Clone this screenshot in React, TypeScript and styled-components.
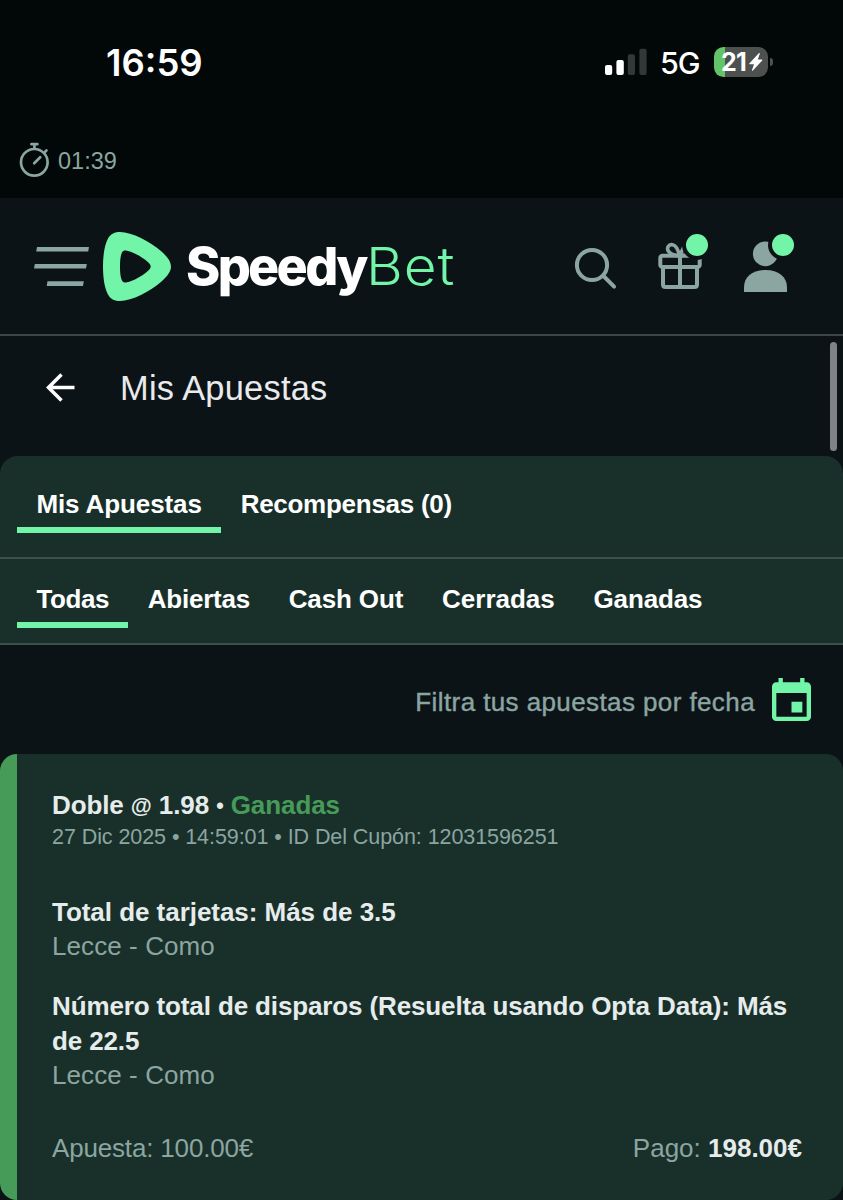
import React from "react";
import styled, { createGlobalStyle } from "styled-components";

const c = {
  page: "#0c1317",
  status: "#010807",
  panel: "#19302a",
  mint: "#73f5a9",
  green: "#479b59",
  muted: "#8ba5a1",
  light: "#e6eceb",
};

const Global = createGlobalStyle`
  * { box-sizing: border-box; }
  body { margin: 0; background: ${c.page}; font-family: "Liberation Sans", Arial, sans-serif; }
  svg { display: block; flex: none; }
`;

const Screen = styled.main`
  width: 843px;
  height: 1200px;
  overflow: hidden;
  background: ${c.page};
  color: #fff;
`;

const StatusArea = styled.div`
  height: 198px;
  background: ${c.status};
  display: flex;
  flex-direction: column;
  justify-content: space-between;
`;

const StatusBar = styled.div`
  height: 124px;
  padding: 0 70px 0 106px;
  display: flex;
  align-items: center;
  justify-content: space-between;
  font-family: Inter, sans-serif;
`;

const Clock = styled.span`
  font-size: 36.5px;
  font-weight: 600;
  line-height: 44px;
  padding-top: 1px;
`;

const StatusIcons = styled.div`
  display: flex;
  align-items: center;
`;

const Network = styled.span`
  width: 53px;
  padding: 2px 0 0 13px;
  font-size: 30.5px;
  font-weight: 500;
  letter-spacing: -1px;
  line-height: 40px;
  white-space: nowrap;
`;

const Battery = styled.div`
  width: 54px;
  height: 30px;
  margin-left: 14px;
  padding-left: 7px;
  border-radius: 9.5px;
  display: flex;
  align-items: center;
  background: linear-gradient(90deg, #62c466 11.5px, #4c5150 11.5px);
`;

const Charge = styled.span`
  font-size: 25px;
  font-weight: 700;
  letter-spacing: -0.8px;
  width: 28px;
`;

const Nub = styled.div`
  width: 3px;
  height: 8px;
  margin-left: 2px;
  border-radius: 0 3px 3px 0;
  background: #4c5150;
`;

const Session = styled.div`
  height: 60px;
  padding: 4px 0 0 19px;
  display: flex;
  align-items: flex-start;
  gap: 8px;
  color: ${c.muted};
  font-size: 23.5px;
  line-height: 38px;
`;

const Header = styled.header`
  height: 138px;
  border-bottom: 2px solid #3b4647;
  padding: 0 47px 0 34px;
  display: flex;
  align-items: center;
`;

const Wordmark = styled.div`
  flex: 1;
  padding: 2px 0 0 15px;
  display: flex;
  align-items: baseline;
  font-family: Inter, sans-serif;
  font-size: 52px;
  line-height: 64px;
`;

const BrandBold = styled.span`
  width: 180px;
  font-weight: 800;
  letter-spacing: -2.7px;
`;

const BrandThin = styled.span`
  font-weight: 280;
  letter-spacing: 0.8px;
  color: ${c.mint};
  transform: scaleX(1.09);
  transform-origin: left;
`;

const TitleRow = styled.div`
  height: 120px;
  padding: 0 6px 0 45px;
  display: flex;
  align-items: flex-start;
`;

const BackLink = styled.a`
  margin-top: 36px;
`;

const Title = styled.h1`
  flex: 1;
  margin: 31px 0 0 45px;
  font-size: 34.4px;
  font-weight: 400;
  line-height: 42px;
  letter-spacing: 0.25px;
  color: #e9eaeb;
`;

const Scrollbar = styled.div`
  width: 7px;
  height: 109px;
  margin-top: 6px;
  border-radius: 4px;
  background: #7f8385;
`;

const Panel = styled.nav`
  border-radius: 18px 18px 0 0;
  background: ${c.panel};
`;

const TabRow = styled.div<{ $h: number; $top: number }>`
  height: ${(p) => p.$h}px;
  padding: ${(p) => p.$top}px 17px 0;
  display: flex;
  align-items: flex-start;
  border-bottom: 2px solid #3c504c;
`;

const Tab = styled.button<{ $active?: boolean; $spacing?: number }>`
  border: 0;
  background: none;
  padding: 0 19.4px;
  height: 47px;
  font: 700 26px/36px "Liberation Sans", Arial, sans-serif;
  letter-spacing: ${(p) => p.$spacing ?? 0}px;
  color: #fff;
  display: flex;
  align-items: flex-start;
  white-space: nowrap;
  border-bottom: 6px solid ${(p) => (p.$active ? c.mint : "transparent")};
`;

const Filter = styled.div`
  height: 109px;
  padding: 0 32px 0 0;
  display: flex;
  align-items: center;
  justify-content: flex-end;
  gap: 17px;
`;

const FilterLabel = styled.span`
  margin-top: 6px;
  font-size: 26px;
  letter-spacing: 0.4px;
  color: ${c.muted};
  -webkit-text-stroke: 0.4px ${c.muted};
`;

const Card = styled.article`
  height: 446px;
  padding: 34px 41px 0 35px;
  border-left: 17px solid ${c.green};
  border-radius: 17px;
  background: ${c.panel};
  font-size: 26px;
  line-height: 34.4px;
`;

const Strong = styled.div<{ $spacing?: number }>`
  font-weight: 700;
  color: ${c.light};
  letter-spacing: ${(p) => p.$spacing ?? 0}px;
`;

const Minor = styled.span`
  font-size: 21.5px;
  line-height: 0;
  vertical-align: 1px;
`;

const Won = styled.span`
  color: ${c.green};
`;

const Meta = styled.div`
  font-size: 21.5px;
  line-height: 30px;
  letter-spacing: -0.07px;
  color: ${c.muted};
`;

const Selection = styled.section<{ $top: number }>`
  margin-top: ${(p) => p.$top}px;
`;

const Match = styled.div`
  color: ${c.muted};
  letter-spacing: 0.08px;
`;

const Totals = styled.footer`
  margin-top: 38px;
  display: flex;
  justify-content: space-between;
  color: ${c.muted};
`;

const Stake = styled.span`
  letter-spacing: -0.17px;
`;

const Amount = styled.b`
  color: ${c.light};
`;

const Signal = () => (
  <svg width="42" height="28" viewBox="0 0 42 28" fill="#fff">
    <rect x="0" y="17" width="7.2" height="10" rx="2" />
    <rect x="11.4" y="12" width="7.4" height="15" rx="2" />
    <g fill="#323837">
      <rect x="22.8" y="6.3" width="7.2" height="20.7" rx="2" />
      <rect x="34.4" y="0.7" width="7.2" height="26.3" rx="2" />
    </g>
  </svg>
);

const Bolt = () => (
  <svg width="14" height="18" viewBox="0 0 14 18" fill="#fff">
    <path d="M9.800 0.200.5 10.200c-.5.600-.2 1.100.5 1.100h4L3 17c-.2.700.500 1 .9.500l9.300-10c.5-.6.2-1.100-.5-1.100H8.800L10.800.7c.2-.7-.5-1-1-.5z" />
  </svg>
);

const Stopwatch = () => (
  <svg width="31" height="36" viewBox="0 0 31 36" fill="none" stroke={c.muted} strokeWidth="2.7" strokeLinecap="round">
    <circle cx="15.3" cy="20.3" r="13.3" />
    <path d="M12.4 2.2h6M15.4 2.5v4M25.3 10.600l2.200-2.200M15.200 21.200l6-6" />
  </svg>
);

const Menu = () => (
  <svg width="55" height="40" viewBox="0 -1 55 40" fill={c.muted}>
    <path d="M3 0h52l-.8 4.600h-52zM.8 17h52l-.8 4.600H0zM13.500 34.300h36.300l-.8 4.600H12.700z" />
  </svg>
);

const Logo = () => (
  <svg width="82" height="69" viewBox="-14 0 82 69" fill={c.mint}>
    <path
      fillRule="evenodd"
      d="M0 34.500C0 22 1.800 12.500 5 6.500C7.800 1.500 12 0 17 0C29 0 47 9.500 58.500 19.500C64.500 25 68 29.500 68 34.500C68 39.500 64.500 44 58.500 49.500C47 59.500 29 69 17 69C12 69 7.800 67.500 5 62.500C1.800 56.500 0 47 0 34.500ZM17 34.500C17 42 17.800 46 19 48.500C20 50.500 21.800 50.800 24 50.300C30 49 38.500 44.500 44 39.700C46.500 37.500 47.700 36.200 47.700 34.500C47.700 32.800 46.500 31.500 44 29.300C38.500 24.500 30 20 24 18.700C21.800 18.200 20 18.500 19 20.500C17.800 23 17 27 17 34.500Z"
    />
  </svg>
);

const HeaderIcons = () => (
  <svg width="222" height="66" viewBox="574 233 222 66" fill="none" stroke={c.muted} strokeWidth="4">
    <circle cx="592" cy="265" r="15.100" />
    <path d="M603.500 276l10.600 10.700" strokeLinecap="round" />
    <rect x="660.300" y="255.700" width="39.400" height="11.400" rx="2.200" />
    <path d="M663 267v17.500q0 2.500 2.500 2.500h29q2.500 0 2.500-2.500V267M680 255v32" />
    <path d="M679.500 256c-1-5-3-10.500-7-11.300-4-.7-6 3.300-4.200 6.300 2 3.400 6.500 4.500 11.200 5zM680.500 256c1-5 3-10.500 7-11.300 4-.7 6 3.300 4.200 6.300-2 3.400-6.500 4.500-11.200 5z" strokeWidth="3.600" />
    <g stroke="none">
      <circle cx="765.300" cy="253.800" r="12.400" fill={c.muted} />
      <path d="M744 292v-4.500C744 276.500 752.500 270 765.500 270S787 276.500 787 287.500V292z" fill={c.muted} />
      <circle cx="697" cy="245" r="15" fill={c.page} />
      <circle cx="783" cy="245" r="15" fill={c.page} />
      <circle cx="697" cy="245" r="11" fill={c.mint} />
      <circle cx="783" cy="245" r="11" fill={c.mint} />
    </g>
  </svg>
);

const BackArrow = () => (
  <svg width="30" height="30" viewBox="0 0 30 30" fill="none" stroke="#fff" strokeWidth="3.500">
    <path d="M29.500 15.500H3.500M16.500 2.500l-13 13 13 13" />
  </svg>
);

const Calendar = () => (
  <svg width="39" height="43" viewBox="3 1 18 20" preserveAspectRatio="none" fill={c.mint}>
    <path d="M17 12h-5v5h5v-5zM16 1v2H8V1H6v2H5c-1.110 0-2 .9-2 2v14c0 1.100.890 2 2 2h14c1.100 0 2-.9 2-2V5c0-1.100-.9-2-2-2h-1V1h-2zm3 18H5V8h14v11z" />
  </svg>
);

export default function App() {
  return (
    <Screen>
      <Global />
      <StatusArea>
        <StatusBar>
          <Clock>16:59</Clock>
          <StatusIcons>
            <Signal />
            <Network>5G</Network>
            <Battery>
              <Charge>21</Charge>
              <Bolt />
            </Battery>
            <Nub />
          </StatusIcons>
        </StatusBar>
        <Session>
          <Stopwatch />
          <span>01:39</span>
        </Session>
      </StatusArea>
      <Header>
        <Menu />
        <Logo />
        <Wordmark>
          <BrandBold>Speedy</BrandBold>
          <BrandThin>Bet</BrandThin>
        </Wordmark>
        <HeaderIcons />
      </Header>
      <TitleRow>
        <BackLink>
          <BackArrow />
        </BackLink>
        <Title>Mis Apuestas</Title>
        <Scrollbar />
      </TitleRow>
      <Panel>
        <TabRow $h={103} $top={30}>
          <Tab $active $spacing={-0.1}>Mis Apuestas</Tab>
          <Tab $spacing={-0.27}>Recompensas (0)</Tab>
        </TabRow>
        <TabRow $h={86} $top={22}>
          <Tab $active $spacing={-0.4}>Todas</Tab>
          <Tab $spacing={-0.25}>Abiertas</Tab>
          <Tab $spacing={-0.12}>Cash Out</Tab>
          <Tab>Cerradas</Tab>
          <Tab $spacing={-0.15}>Ganadas</Tab>
        </TabRow>
      </Panel>
      <Filter>
        <FilterLabel>Filtra tus apuestas por fecha</FilterLabel>
        <Calendar />
      </Filter>
      <Card>
        <Strong $spacing={-0.1}>
          Doble <Minor>@</Minor> 1.98 <Minor>•</Minor> <Won>Ganadas</Won>
        </Strong>
        <Meta>27 Dic 2025 • 14:59:01 • ID Del Cupón: 12031596251</Meta>
        <Selection $top={42.6}>
          <Strong $spacing={-0.04}>Total de tarjetas: Más de 3.5</Strong>
          <Match>Lecce - Como</Match>
        </Selection>
        <Selection $top={25.6}>
          <Strong $spacing={-0.13}>Número total de disparos (Resuelta usando Opta Data): Más de 22.5</Strong>
          <Match>Lecce - Como</Match>
        </Selection>
        <Totals>
          <Stake>Apuesta: 100.00€</Stake>
          <span>
            Pago: <Amount>198.00€</Amount>
          </span>
        </Totals>
      </Card>
    </Screen>
  );
}
